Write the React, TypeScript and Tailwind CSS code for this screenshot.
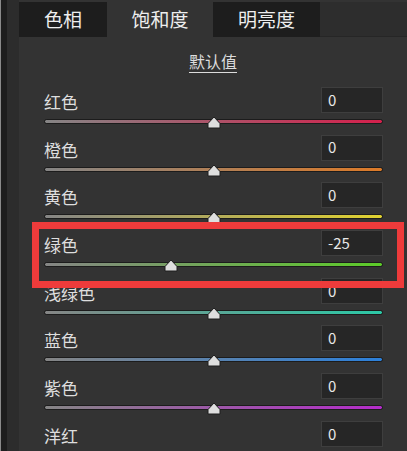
import type { CSSProperties } from "react";

type Channel = { name: string; value: number; color: string };

const CHANNELS: Channel[] = [
  { name: "红色", value: 0, color: "#d4204c" },
  { name: "橙色", value: 0, color: "#dc7a28" },
  { name: "黄色", value: 0, color: "#e0d230" },
  { name: "绿色", value: -25, color: "#5ccc28" },
  { name: "浅绿色", value: 0, color: "#2cc8a6" },
  { name: "蓝色", value: 0, color: "#2c80da" },
  { name: "紫色", value: 0, color: "#b42cca" },
  { name: "洋红", value: 0, color: "#d42a8c" },
];

const FONT = { fontFamily: '"Noto Sans CJK SC", "Liberation Sans", sans-serif' };

function Thumb({ pct }: { pct: number }) {
  // little "house" shaped slider handle sitting on the track
  const style: CSSProperties = { left: `calc(${pct}% - 8px)` };
  return (
    <svg className="absolute top-[-3px]" style={style} width="16" height="13" viewBox="0 0 16 13">
      <path d="M8 1 L14 7.5 L14 12 L2 12 L2 7.5 Z" fill="#dedede" stroke="#1e1e1e" strokeWidth="1" />
    </svg>
  );
}

function Row({ ch }: { ch: Channel }) {
  const pct = 50 + ch.value / 2;
  return (
    <div className="relative h-[47.7px] pl-[44px] pr-[24px]">
      <div className="flex items-start justify-between">
        <span className="mt-[6px] text-[17px] leading-[22px] text-[#dedede]">{ch.name}</span>
        <div className="mt-[2px] flex h-[26px] w-[62px] items-center border border-[#3e3e3e] bg-[#262626] pl-[6px] text-[15px] text-[#e8e8e8]">
          {ch.value}
        </div>
      </div>
      <div className="relative mt-[6px] h-[5px] w-[339px]">
        <div
          className="h-[5px] rounded-full border border-[#1c1c1c]"
          style={{ background: `linear-gradient(to right, #858585, ${ch.color})` }}
        />
        <Thumb pct={pct} />
      </div>
    </div>
  );
}

export default function App() {
  return (
    <div className="relative h-[451px] w-[407px] overflow-hidden bg-[#333333]" style={FONT}>
      <div className="flex h-full">
        <div className="w-[1px] bg-[#8a8a8a]" />
        <div className="w-[6px] bg-[#1d1d1d]" />
        <div className="w-[12px] bg-[#2c2c2c]" />
        <div className="flex-1">
          {/* tabs */}
          <div className="flex h-[37px] pt-[2px]">
            <div className="flex w-[88px] items-center justify-center bg-[#1d1d1d] text-[19px] text-[#eeeeee]">
              色相
            </div>
            <div className="flex w-[106px] items-center justify-center bg-[#333333] text-[19px] text-[#eeeeee]">
              饱和度
            </div>
            <div className="flex w-[107px] items-center justify-center bg-[#1d1d1d] text-[19px] text-[#eeeeee]">
              明亮度
            </div>
            <div className="flex-1 border-b border-[#262626] bg-[#2d2d2d]" />
          </div>

          <div className="flex h-[48px] items-center justify-center">
            <span className="text-[16px] text-[#dddddd] underline underline-offset-4">默认值</span>
          </div>

          <div className="-ml-[19px]">
            {CHANNELS.map((ch) => (
              <Row key={ch.name} ch={ch} />
            ))}
          </div>
        </div>
      </div>

      {/* annotation box around the green row */}
      <div className="pointer-events-none absolute left-[32px] top-[222px] h-[66px] w-[372px] border-[7px] border-[#ee3b3b]" />
    </div>
  );
}
